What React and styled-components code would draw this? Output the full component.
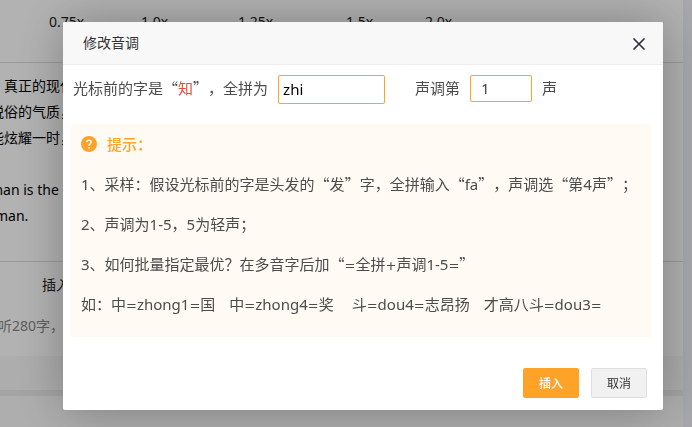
import React from "react";
import styled, { createGlobalStyle } from "styled-components";

const GlobalStyle = createGlobalStyle`
  * { box-sizing: border-box; }
  body {
    margin: 0;
    overflow: hidden;
    background: #fff;
    font-family: "Noto Sans", "Noto Sans CJK SC", sans-serif;
    font-size: 14px;
    color: #222;
    text-spacing-trim: space-all;
  }
  button, input { font-family: inherit; }
`;

const Page = styled.div`
  display: grid;
  grid-template-columns: minmax(0, 1fr) 9px;
  height: 100vh;
  overflow: hidden;
  white-space: nowrap;
`;

const Editor = styled.main`
  overflow: hidden;
`;

const Gutter = styled.div`
  background: #eff0f7;
`;

const Speeds = styled.div`
  display: grid;
  grid-template-columns: 92px 97px 108px 79px 60px;
  height: 63px;
  padding-left: 49px;
  line-height: 44px;
  border-bottom: 1px solid #ddd;
`;

const Passage = styled.div`
  height: 199px;
  padding-top: 10px;
  margin-left: -10px;
  line-height: 26px;
  color: #000;
  border-bottom: 1px solid #ddd;
`;

const Line = styled.p`
  margin: 0;
  min-height: 26px;
  padding-left: ${(p) => p.$indent || 0}px;
`;

const InsertLabel = styled.div`
  padding-left: 42px;
  line-height: 46px;
`;

const Quota = styled.div`
  height: 48px;
  line-height: 36px;
  margin-left: -2px;
  color: #888;
`;

const Band = styled.div`
  height: ${(p) => p.$height}px;
  background: ${(p) => p.$color};
`;

const Overlay = styled.div`
  position: fixed;
  inset: 0;
  padding: 22px 29px 17px 63px;
  background: rgba(0, 0, 0, 0.3);
`;

const Dialog = styled.section`
  display: flex;
  flex-direction: column;
  background: #fff;
  border-radius: 2px;
  box-shadow: 1px 1px 50px rgba(0, 0, 0, 0.3);
  color: #4c4c4c;
  font-size: 15px;
`;

const Header = styled.header`
  display: flex;
  align-items: center;
  justify-content: space-between;
  height: 43px;
  padding: 0 16px 0 20px;
  background: #f8f8f8;
  border-bottom: 1px solid #eee;
  border-radius: 2px 2px 0 0;
`;

const Title = styled.h2`
  margin: 0;
  font-size: 14px;
  font-weight: 400;
  line-height: 42px;
  color: #333;
`;

const CloseButton = styled.button`
  display: flex;
  padding: 0;
  border: 0;
  background: none;
  color: #2e2d3c;
`;

const Fields = styled.form`
  display: flex;
  align-items: flex-start;
  gap: 10px;
  padding: 10px 10px 20px;
  line-height: 26px;
  white-space: nowrap;
`;

const Label = styled.label`
  margin-left: ${(p) => (p.$spaced ? 20 : 0)}px;
`;

const TextInput = styled.input`
  width: ${(p) => p.$width}px;
  height: ${(p) => p.$height}px;
  padding: 0 ${(p) => p.$pad}px 2px;
  border: 1px solid #ffa228;
  border-radius: 2px;
  outline: 0;
  background: #fff;
  color: ${(p) => p.$color};
  font-size: 15px;
`;

const Accent = styled.span`
  color: #e84c3d;
`;

const Wide = styled.span`
  font-family: "Noto Sans CJK SC", sans-serif;
`;

const Sign = styled.span`
  font-family: "DejaVu Sans", sans-serif;
  font-size: 13px;
  line-height: 1;
`;

const Tips = styled.div`
  margin: 0 12px 0 8px;
  padding: 0 10px 13px;
  background: #fffaf3;
  line-height: 40px;
  white-space: nowrap;
`;

const TipsTitle = styled.h3`
  display: flex;
  align-items: center;
  gap: 10px;
  margin: 0;
  font-size: 15px;
  font-weight: 500;
  color: #ffa228;
`;

const Tip = styled.p`
  margin: 0;
`;

const Example = styled.span`
  margin-right: ${(p) => p.$after || 0}px;
`;

const Actions = styled.footer`
  display: flex;
  justify-content: flex-end;
  gap: 12px;
  padding: 31px 16px 12px;
`;

const Button = styled.button`
  width: 56px;
  height: 30px;
  padding: 0;
  border: 1px solid ${(p) => (p.$primary ? "#ffa228" : "#dedede")};
  border-radius: 2px;
  background: ${(p) => (p.$primary ? "#ffa228" : "#f1f1f1")};
  color: ${(p) => (p.$primary ? "#fff" : "#333")};
  font-size: 12px;
  font-weight: ${(p) => (p.$primary ? 500 : 400)};
`;

const speeds = ["0.75x", "1.0x", "1.25x", "1.5x", "2.0x"];

const examples = [
  { text: "如：中=zhong1=国", after: 14 },
  { text: "中=zhong4=奖", after: 18 },
  { text: "斗=dou4=志昂扬", after: 14 },
  { text: "才高八斗=dou3=", after: 0 },
];

const Quoted = ({ children }) => (
  <>
    <Wide>“</Wide>
    {children}
    <Wide>”</Wide>
  </>
);

const Formula = ({ children }) =>
  children.split(/([=+])/).map((part, i) => (i % 2 ? <Sign key={i}>{part}</Sign> : part));

const CloseIcon = () => (
  <svg width="16" height="16" viewBox="0 0 16 16" fill="none" stroke="currentColor" strokeWidth="1.6" aria-hidden="true">
    <path d="M2.5 3.5 13.5 14.5M13.5 3.5 2.5 14.5" />
  </svg>
);

const HelpIcon = () => (
  <svg width="16" height="16" viewBox="0 0 16 16" aria-hidden="true">
    <circle cx="8" cy="8" r="8" fill="#ffa228" />
    <path d="M5.8 6.3C5.8 3.4 10.2 3.4 10.2 6.2C10.2 7.8 8 7.9 8 9.7" fill="none" stroke="#fff" strokeWidth="1.4" />
    <circle cx="8" cy="11.8" r="0.9" fill="#fff" />
  </svg>
);

export default function App() {
  return (
    <>
      <GlobalStyle />
      <Page lang="zh-CN">
        <Editor>
          <Speeds>
            {speeds.map((s) => (
              <span key={s}>{s}</span>
            ))}
          </Speeds>
          <Passage>
            <Line>，真正的现代</Line>
            <Line>脱俗的气质，</Line>
            <Line>能炫耀一时，</Line>
            <Line />
            <Line>man is the</Line>
            <Line $indent={5}>man.</Line>
          </Passage>
          <InsertLabel>插入</InsertLabel>
          <Quota>听280字，</Quota>
          <Band $height={34} $color="#f8f8f8" />
          <Band $height={6} $color="#ebebeb" />
          <Band $height={31} $color="#fafafa" />
        </Editor>
        <Gutter />
      </Page>
      <Overlay lang="zh-CN">
        <Dialog role="dialog" aria-labelledby="dialog-title">
          <Header>
            <Title id="dialog-title">修改音调</Title>
            <CloseButton type="button" aria-label="关闭">
              <CloseIcon />
            </CloseButton>
          </Header>
          <Fields>
            <Label htmlFor="pinyin">
              光标前的字是<Quoted><Accent>知</Accent></Quoted>，全拼为
            </Label>
            <TextInput id="pinyin" type="text" defaultValue="zhi" $width={107} $height={29} $pad={4} $color="#000" />
            <Label htmlFor="tone" $spaced>声调第</Label>
            <TextInput id="tone" type="text" defaultValue="1" $width={62} $height={27} $pad={10} $color="#444" />
            <span>声</span>
          </Fields>
          <Tips>
            <TipsTitle>
              <HelpIcon />
              提示：
            </TipsTitle>
            <Tip>
              1、采样：假设光标前的字是头发的<Quoted>发</Quoted>字，全拼输入<Quoted>fa</Quoted>，声调选<Quoted>第4声</Quoted>；
            </Tip>
            <Tip>2、声调为1-5，5为轻声；</Tip>
            <Tip>
              3、如何批量指定最优？在多音字后加<Quoted><Formula>=全拼+声调1-5=</Formula></Quoted>
            </Tip>
            <Tip>
              {examples.map((e) => (
                <Example key={e.text} $after={e.after}>
                  <Formula>{e.text}</Formula>
                </Example>
              ))}
            </Tip>
          </Tips>
          <Actions>
            <Button type="button" $primary>插入</Button>
            <Button type="button">取消</Button>
          </Actions>
        </Dialog>
      </Overlay>
    </>
  );
}
